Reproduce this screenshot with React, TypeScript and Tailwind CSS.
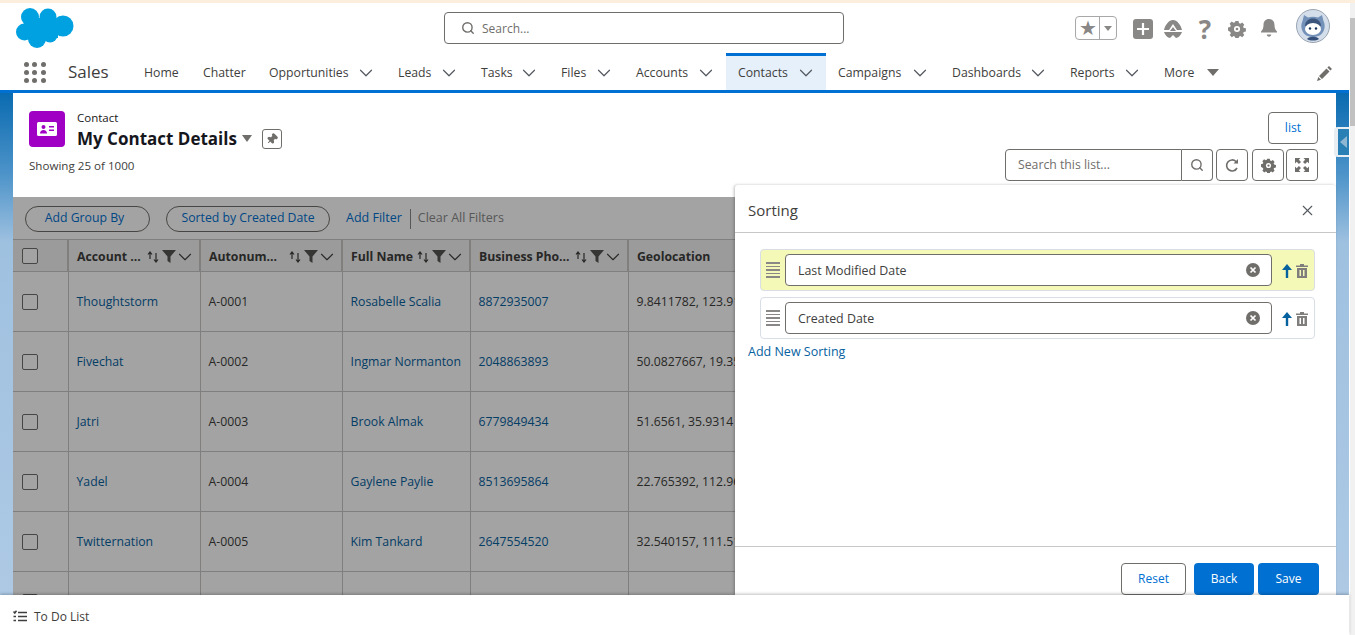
import { ChevronDown, Search, X, Pin } from "lucide-react";

const font = "font-['Open_Sans','Noto_Sans',sans-serif]";

const tabs = [
  { label: "Home", w: "w-[59px]", caret: false },
  { label: "Chatter", w: "w-[66px]", caret: false },
  { label: "Opportunities", w: "w-[129px]", caret: true },
  { label: "Leads", w: "w-[83px]", caret: true },
  { label: "Tasks", w: "w-[80px]", caret: true },
  { label: "Files", w: "w-[75px]", caret: true },
  { label: "Accounts", w: "w-[102px]", caret: true },
  { label: "Contacts", w: "w-[100px]", caret: true, active: true },
  { label: "Campaigns", w: "w-[114px]", caret: true },
  { label: "Dashboards", w: "w-[118px]", caret: true },
  { label: "Reports", w: "w-[94px]", caret: true },
];

const rows = [
  ["Thoughtstorm", "A-0001", "Rosabelle Scalia", "8872935007", "9.8411782, 123.9104"],
  ["Fivechat", "A-0002", "Ingmar Normanton", "2048863893", "50.0827667, 19.3544"],
  ["Jatri", "A-0003", "Brook Almak", "6779849434", "51.6561, 35.9314"],
  ["Yadel", "A-0004", "Gaylene Paylie", "8513695864", "22.765392, 112.9610"],
  ["Twitternation", "A-0005", "Kim Tankard", "2647554520", "32.540157, 111.5130"],
];

function Cloud() {
  return (
    <svg width="58" height="40" viewBox="0 0 58 40" fill="#00a1e0">
      <circle cx="14" cy="9" r="9" />
      <circle cx="32" cy="9" r="8.5" />
      <circle cx="47" cy="18" r="10.5" />
      <circle cx="8.5" cy="24" r="8.5" />
      <circle cx="21" cy="31" r="9" />
      <circle cx="34" cy="27" r="7.5" />
      <rect x="10" y="10" width="32" height="20" />
    </svg>
  );
}

function Waffle() {
  const dots = [0, 1, 2, 3, 4, 5, 6, 7, 8];
  return (
    <div className="grid grid-cols-3 gap-[3px] w-[22px]">
      {dots.map((d) => (
        <span key={d} className="w-[5px] h-[5px] rounded-full bg-[#706e6b]" />
      ))}
    </div>
  );
}

function Gear({ size = 18, color = "#8a8886" }: { size?: number; color?: string }) {
  return (
    <svg width={size} height={size} viewBox="0 0 20 20">
      <path
        fill={color}
        d="M8.3 1h3.4l.5 2.4 1.5.7 2.1-1.3 2.3 2.4-1.3 2 .7 1.6 2.4.5v3.4l-2.4.5-.7 1.6 1.3 2-2.3 2.4-2.1-1.3-1.5.7-.5 2.4H8.3l-.5-2.4-1.5-.7-2.1 1.3-2.3-2.4 1.3-2-.7-1.6L0 11.7V8.3l2.4-.5.7-1.6-1.3-2L4.1 1.8l2.1 1.3 1.5-.7z"
      />
      <circle cx="10" cy="10" r="3.4" fill="white" />
      <circle cx="10" cy="10" r="1.5" fill={color} />
    </svg>
  );
}

function SortArrows() {
  return (
    <svg width="14" height="14" viewBox="0 0 14 14" fill="none" stroke="#3e3e3c" strokeWidth="1.2">
      <path d="M4 9V2.500M2 4.500 4 2l2 2.500" />
      <path d="M10 3v9M8 9.500 10 12l2-2.500" />
    </svg>
  );
}

function Funnel() {
  return (
    <svg width="14" height="13" viewBox="0 0 14 13" fill="#555553">
      <path d="M0 0h14L8.500 6.500V13L5.500 11V6.500z" />
    </svg>
  );
}

function HeaderCell({ label, w }: { label: string; w: string }) {
  return (
    <th className={`${w} border-r-2 border-[#c9c7c5] pl-2 pr-[3px] pt-[2px] text-left`}>
      <div className="flex items-center gap-[2px]">
        <span className="flex-1 min-w-0 whitespace-nowrap text-[12.25px] font-bold text-[#3e3e3c] pt-[2px]">{label}</span>
        <SortArrows />
        <Funnel />
        <ChevronDown size={22} strokeWidth={1.2} className="text-[#3e3e3c] -ml-[4px]" />
      </div>
    </th>
  );
}

function SortRow({ label, highlight }: { label: string; highlight?: boolean }) {
  return (
    <div
      className={`h-[42px] flex items-center px-[5px] rounded border border-[#d8dde6] ${
        highlight ? "bg-[#f4f9b8]" : "bg-white"
      }`}
    >
      <div className="flex flex-col gap-[2px] w-[14px] mr-[5px]">
        <span className="h-[1.5px] bg-[#8a8886]" />
        <span className="h-[1.5px] bg-[#8a8886]" />
        <span className="h-[1.5px] bg-[#8a8886]" />
        <span className="h-[1.5px] bg-[#8a8886]" />
        <span className="h-[1.5px] bg-[#8a8886]" />
      </div>
      <div className="w-[487px] h-8 flex items-center justify-between pl-3 pr-[11px] rounded border border-[#706e6b] bg-white text-[12.4px] text-[#3e3e3c]">
        <span className="pt-[2px]">{label}</span>
        <svg width="14" height="14" viewBox="0 0 14 14">
          <circle cx="7" cy="7" r="7" fill="#706e6b" />
          <path d="M4.5 4.5l5 5M9.5 4.5l-5 5" stroke="white" strokeWidth="1.7" />
        </svg>
      </div>
      <svg width="12" height="14" viewBox="0 0 12 14" className="ml-[9px] mt-[2px]" fill="#06629f">
        <path d="M6 0l5 6H7.200v8H4.800V6H1z" />
      </svg>
      <svg width="12" height="14" viewBox="0 0 12 14" className="ml-[3px] mt-[2px]" fill="#807e7c">
        <path d="M4 0h4v1.500h4V3H0V1.500h4zM1 4h10v10H1zM3.500 6v6h1.500V6zm3.500 0v6h1.500V6z" fillRule="evenodd" />
      </svg>
    </div>
  );
}

export default function App() {
  return (
    <div className={`${font} w-[1355px] h-[635px] flex flex-col overflow-hidden bg-white text-[12.25px]`}>
      <div className="h-[3px] bg-[#fbeedd] shrink-0" />
      <div className="flex-1 min-h-0 flex">
        <div className="w-[1349px] flex flex-col">
          <header className="h-[52px] shrink-0 flex items-start bg-white">
            <div className="ml-[16px] w-[428px] mt-[5px]">
              <Cloud />
            </div>
            <div className="w-[400px] h-8 mt-[9px] flex items-center rounded border border-[#706e6b] pl-4 gap-[7px] text-[12px] text-[#706e6b]">
              <Search size={14} strokeWidth={2.4} />
              <span className="pt-[1px]">Search...</span>
            </div>
            <div className="ml-auto flex items-start mr-[19px]">
              <div className="mt-[13px] w-[42px] h-[24px] flex rounded border border-[#a8a8a8]">
                <div className="w-[24px] flex items-center justify-center border-r border-[#a8a8a8] text-[#8a8886] text-[20px] leading-none">
                  ★
                </div>
                <div className="flex-1 flex items-center justify-center">
                  <span className="border-x-[4px] border-x-transparent border-t-[5px] border-t-[#8a8886]" />
                </div>
              </div>
              <div className="mt-[16px] ml-[16px] w-5 h-5 rounded-[3px] bg-[#8a8886] flex items-center justify-center">
                <svg width="14" height="14" viewBox="0 0 14 14" stroke="white" strokeWidth="2.2">
                  <path d="M7 1v12M1 7h12" />
                </svg>
              </div>
              <svg width="20" height="20" viewBox="0 0 20 20" className="mt-[16px] ml-[10px]" fill="#8a8886">
                <path d="M10 1C14 1 18 6 19 11H14L10 5 6 11H1C2 6 6 1 10 1ZM10 8l3 4H7ZM1 13H19C18 16 15 19 13 19L10 16 7 19C5 19 2 16 1 13Z" />
              </svg>
              <span className="mt-[14px] ml-[15px] w-[14px] flex justify-center text-[26px] font-bold leading-[24px] text-[#8a8886]">
                ?
              </span>
              <span className="mt-[17px] ml-[16px] flex">
                <Gear size={18} />
              </span>
              <svg width="20" height="20" viewBox="0 0 20 20" className="mt-[15px] ml-[13px]" fill="#8a8886">
                <path d="M10 1c3.500 0 5.500 2.500 5.500 6 0 3 .8 5 2.500 6.500v1H2v-1C3.700 12 4.500 10 4.500 7c0-3.500 2-6 5.500-6ZM7.800 16.500h4.400c0 1.300-1 2.200-2.200 2.200s-2.200-.9-2.200-2.200Z" />
              </svg>
              <svg width="34" height="34" viewBox="0 0 34 34" className="mt-[6px] ml-[17px]">
                <circle cx="17" cy="17" r="16.5" fill="#d3deea" stroke="#9aa5b1" />
                <path d="M8 6l4 2.500c3-1 7-1 10 0L26 6l1.500 6c1.500 3 1.500 6 .5 9-2 5-6 7-11 7s-9-2-11-7c-1-3-1-6 .5-9z" fill="#7391b8" />
                <path d="M9 17c0-5 4-7.500 8-7.500s8 2.500 8 7.500z" fill="#3c557c" />
                <ellipse cx="17" cy="20" rx="8" ry="6" fill="white" />
                <circle cx="14" cy="19.5" r="1.2" fill="#16325c" />
                <circle cx="20" cy="19.5" r="1.2" fill="#16325c" />
                <path d="M11 30c2-3 10-3 12 0-3 2-9 2-12 0z" fill="#34507a" />
              </svg>
            </div>
          </header>

          <nav className="h-[35px] shrink-0 flex items-stretch bg-white">
            <div className="w-[46px] pl-[24px] flex items-center">
              <Waffle />
            </div>
            <div className="w-[86px] pl-[22px] flex items-center text-[17px] text-[#3e3e3c] -mt-[2px]">Sales</div>
            {tabs.map((t) => (
              <div
                key={t.label}
                className={`${t.w} shrink-0 flex items-center pl-3 pr-[9px] text-[#3e3e3c] ${
                  t.active ? "bg-[#e5f0fb] border-t-[3px] border-[#0070d2] -mt-[2px] h-[37px]" : "h-full pt-[1px]"
                }`}
              >
                <span className="flex-1 whitespace-nowrap">{t.label}</span>
                {t.caret && <ChevronDown size={22} strokeWidth={1.3} className="text-[#54595f]" />}
              </div>
            ))}
            <div className="flex items-center pl-3 gap-[13px] text-[#3e3e3c] pt-[1px]">
              More
              <span className="-mt-[2px] border-x-[6px] border-x-transparent border-t-[7px] border-t-[#706e6b]" />
            </div>
            <div className="ml-auto mr-[16px] flex items-center">
              <svg width="16" height="16" viewBox="0 0 16 16" fill="#706e6b">
                <path d="M12 1l3 3-1.600 1.600-3-3zM9.500 3.500l3 3L5 14l-3-3zM1.300 12l2.700 2.700L0 16z" />
              </svg>
            </div>
          </nav>

          <div className="h-[3px] shrink-0 bg-[#0070d2]" />

          <main className="flex-1 min-h-0 px-[13px] bg-[linear-gradient(180deg,#0a6bb0_0px,#4c93c9_80px,#9fc1e0_150px,#adc9e4_100%)] relative">
            <div className="h-full flex flex-col bg-white relative">
              <section className="h-[104px] shrink-0 px-4 pt-[18px] flex justify-between">
                <div>
                  <div className="flex items-start">
                    <div className="w-9 h-9 rounded bg-[#a000c4] flex items-center justify-center">
                      <svg width="20" height="14" viewBox="0 0 20 14" fill="white" fillRule="evenodd">
                        <path d="M1.500 0h17A1.500 1.500 0 0 1 20 1.500v11a1.500 1.500 0 0 1-1.500 1.500h-17A1.500 1.500 0 0 1 0 12.500v-11A1.500 1.500 0 0 1 1.500 0ZM6.500 3a2 2 0 1 0 0 4 2 2 0 0 0 0-4ZM3 11.500h7c0-2-1.500-3.500-3.500-3.500S3 9.500 3 11.500ZM12 4v1.500h5V4Zm0 3.500V9h5V7.500Z" />
                      </svg>
                    </div>
                    <div className="ml-3">
                      <div className="text-[11.5px] leading-[14px] text-[#181818]">Contact</div>
                      <div className="flex items-center mt-[1px] h-[25px]">
                        <span className="text-[17px] font-bold text-[#16161d]">My Contact Details</span>
                        <span className="ml-[5px] border-x-[5.5px] border-x-transparent border-t-[7px] border-t-[#706e6b]" />
                        <span className="ml-[10px] w-5 h-5 rounded-[3px] border border-[#706e6b] flex items-center justify-center">
                          <Pin size={12} fill="#706e6b" className="text-[#706e6b] rotate-45" />
                        </span>
                      </div>
                    </div>
                  </div>
                  <div className="text-[11.6px] text-[#3e3e3c] mt-[6px]">Showing 25 of 1000</div>
                </div>
                <div className="flex flex-col items-end mt-[1px] mr-[2px]">
                  <div className="w-[50px] h-8 rounded border border-[#706e6b] flex items-center justify-center text-[#0070d2]">
                    list
                  </div>
                  <div className="flex mt-[5px]">
                    <div className="w-[177px] h-8 rounded-l border border-[#706e6b] pl-3 pt-[1px] flex items-center text-[#706e6b]">
                      Search this list...
                    </div>
                    <div className="w-[31px] h-8 rounded-r border border-l-0 border-[#706e6b] flex items-center justify-center text-[#706e6b]">
                      <Search size={14} strokeWidth={2.4} />
                    </div>
                    <div className="w-8 h-8 ml-[3px] rounded border border-[#706e6b] flex items-center justify-center">
                      <svg width="16" height="16" viewBox="0 0 16 16" fill="none" stroke="#706e6b" strokeWidth="1.6">
                        <path d="M13 11a5.500 5.500 0 1 1-1-6.500l1.500 1.500" />
                        <path d="M14 2v4.500H9.500z" fill="#706e6b" stroke="none" />
                      </svg>
                    </div>
                    <div className="w-8 h-8 ml-1 rounded border border-[#706e6b] flex items-center justify-center">
                      <Gear size={15} color="#706e6b" />
                    </div>
                    <div className="w-8 h-8 ml-[2px] rounded border border-[#706e6b] flex items-center justify-center">
                      <svg width="14" height="14" viewBox="0 0 14 14" fill="#706e6b">
                        <path d="M0 0h5.500L3.800 1.700 6 3.900 3.900 6 1.700 3.800 0 5.500ZM14 0v5.500l-1.700-1.700L10.100 6 8 3.900l2.200-2.200L8.500 0ZM0 14V8.500l1.700 1.700L3.900 8 6 10.100l-2.200 2.200L5.500 14ZM14 14H8.500l1.700-1.700L8 10.100 10.100 8l2.200 2.200L14 8.500Z" />
                      </svg>
                    </div>
                  </div>
                </div>
              </section>

              <section className="flex-1 min-h-0 relative overflow-hidden">
                <div className="h-[42px] flex items-center pl-[12px] pt-[1px] text-[#0070d2]">
                  <span className="w-[125px] h-[26px] pr-[6px] rounded-full border border-[#706e6b] flex items-center justify-center">
                    Add Group By
                  </span>
                  <span className="ml-[16px] w-[164px] h-[26px] rounded-full border border-[#706e6b] flex items-center justify-center">
                    Sorted by Created Date
                  </span>
                  <span className="ml-[16px] text-[12.5px]">Add Filter</span>
                  <span className="ml-[8px] h-5 border-l border-[#8a8886]" />
                  <span className="ml-[7px] text-[12.5px] text-[#8a8a8a]">Clear All Filters</span>
                </div>
                <table className="table-fixed w-[800px] border-collapse bg-white">
                  <thead>
                    <tr className="h-[32px] bg-[#f3f2f2] border-y border-[#c9c7c5]">
                      <th className="w-[55px] border-r-2 border-[#c9c7c5] p-0">
                        <div className="ml-[9px] w-4 h-4 rounded-[2px] border border-[#706e6b] bg-white" />
                      </th>
                      <HeaderCell label="Account ..." w="w-[132px]" />
                      <HeaderCell label="Autonum..." w="w-[142px]" />
                      <HeaderCell label="Full Name" w="w-[128px]" />
                      <HeaderCell label="Business Pho..." w="w-[158px]" />
                      <th className="px-2 pt-[3px] text-left text-[12.25px] font-bold text-[#3e3e3c]">Geolocation</th>
                    </tr>
                  </thead>
                  <tbody>
                    {rows.map((r) => (
                      <tr key={r[1]} className="h-[60px] border-b border-[#c9c7c5]">
                        <td className="border-r border-[#c9c7c5] p-0">
                          <div className="ml-[9px] w-4 h-4 rounded-[2px] border border-[#706e6b] bg-white" />
                        </td>
                        <td className="border-r border-[#c9c7c5] px-2 pt-[2px] text-[#06629f]">{r[0]}</td>
                        <td className="border-r border-[#c9c7c5] px-2 pt-[2px] text-[#3e3e3c]">{r[1]}</td>
                        <td className="border-r border-[#c9c7c5] px-2 pt-[2px] text-[#06629f] whitespace-nowrap">{r[2]}</td>
                        <td className="border-r border-[#c9c7c5] px-2 pt-[2px] text-[#06629f]">{r[3]}</td>
                        <td className="px-2 pt-[2px] text-[#3e3e3c] whitespace-nowrap">{r[4]}</td>
                      </tr>
                    ))}
                    <tr className="h-[60px]">
                      <td className="border-r border-[#c9c7c5] p-0">
                        <div className="ml-[9px] w-4 h-4 rounded-[2px] border border-[#706e6b] bg-white" />
                      </td>
                      <td className="border-r border-[#c9c7c5]" />
                      <td className="border-r border-[#c9c7c5]" />
                      <td className="border-r border-[#c9c7c5]" />
                      <td className="border-r border-[#c9c7c5]" />
                      <td />
                    </tr>
                  </tbody>
                </table>
                <div className="absolute inset-0 bg-black/36" />
              </section>

              {/* sorting panel sits on top of the list */}
              <aside className="absolute right-0 top-[92px] bottom-0 w-[601px] bg-white shadow-[-1px_0_3px_rgba(0,0,0,0.25)] flex flex-col rounded-t-[3px]">
                <div className="h-[48px] shrink-0 flex items-center justify-between pl-[13px] pr-[21px] pt-[4px] border-b border-[#c9c7c5]">
                  <span className="text-[15px] text-[#3e3e3c]">Sorting</span>
                  <X size={17} strokeWidth={1.6} className="text-[#54595f] -mr-[1px]" />
                </div>
                <div className="flex-1 pl-[25px] pr-[21px] pt-[16px] flex flex-col gap-[6px]">
                  <SortRow label="Last Modified Date" highlight />
                  <SortRow label="Created Date" />
                  <span className="-ml-3 -mt-[2px] text-[12.5px] text-[#06629f]">Add New Sorting</span>
                </div>
                <div className="h-[49px] shrink-0 border-t border-[#c9c7c5] flex items-start justify-end gap-[4px] pr-[17px] pt-4">
                  <span className="w-[65px] h-8 mr-1 rounded border border-[#706e6b] flex items-center justify-center text-[12px] text-[#0070d2]">
                    Reset
                  </span>
                  <span className="w-[60px] h-8 rounded bg-[#0070d2] flex items-center justify-center text-[12px] text-white">
                    Back
                  </span>
                  <span className="w-[61px] h-8 rounded bg-[#0070d2] flex items-center justify-center text-[12px] text-white">
                    Save
                  </span>
                </div>
              </aside>
            </div>

            {/* collapse handle on the right edge */}
            <div className="absolute right-0 top-[34px] w-[15px] h-[30px] rounded-l bg-[#e9eef3] pl-[4px] py-[2px]">
              <div className="h-full bg-[#2a7fb4] flex items-center justify-center">
                <span className="border-y-[6px] border-y-transparent border-r-[7px] border-r-[#8fb7d2]" />
              </div>
            </div>
          </main>

          <footer className="h-[40px] shrink-0 bg-white flex items-center pl-[13px] pt-[3px] gap-[7px] text-[12px] text-[#3e3e3c] shadow-[0_-1px_3px_rgba(0,0,0,0.25)] relative">
            <svg width="14" height="13" viewBox="0 0 14 13" fill="none" stroke="#3e3e3c" strokeWidth="1.5">
              <path d="M5 2.500h9M5 6.500h9M5 10.500h9M.5 1.500 1.800 3 3.500.8M.5 6.500h2.500M.5 10.500h2.500" />
            </svg>
            To Do List
          </footer>
        </div>
        <div className="w-[6px] pl-[1px] bg-white">
          <div className="h-full bg-[#f1f1f1] pt-[15px]">
            <div className="h-[108px] bg-[#c1c1c1]" />
          </div>
        </div>
      </div>
    </div>
  );
}
